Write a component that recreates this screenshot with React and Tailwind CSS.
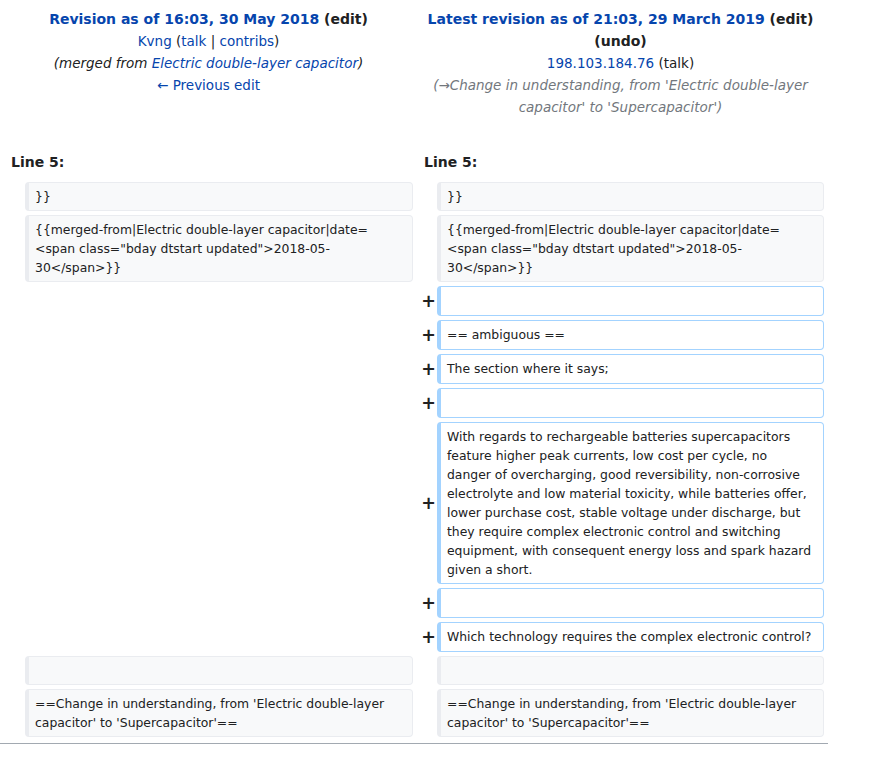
import React from 'react';

const LINK = 'text-[#0645ad]';

const Context = ({ children }) => (
  <div className="rounded-[4px] border border-l-4 border-[#eaecf0] bg-[#f8f9fa] px-[6px] py-[4px] min-h-[29px] whitespace-pre-wrap break-words">
    {children}
  </div>
);

const Added = ({ children }) => (
  <div className="rounded-[4px] border border-l-4 border-[#a3d3ff] bg-white px-[6px] py-[4px] min-h-[30px] whitespace-pre-wrap break-words">
    {children}
  </div>
);

const Plus = () => (
  <div className="flex items-center justify-end -mr-[3px] text-[17.5px] font-bold leading-[21px] text-[#202122]">+</div>
);

const addedLines = [
  '',
  '== ambiguous ==',
  'The section where it says;',
  '',
  'With regards to rechargeable batteries supercapacitors\nfeature higher peak currents, low cost per cycle, no\ndanger of overcharging, good reversibility, non-corrosive\nelectrolyte and low material toxicity, while batteries offer,\nlower purchase cost, stable voltage under discharge, but\nthey require complex electronic control and switching\nequipment, with consequent energy loss and spark hazard\ngiven a short.',
  '',
  'Which technology requires the complex electronic control?',
];

const merged = '{{merged-from|Electric double-layer capacitor|date=\n<span class="bday dtstart updated">2018-05-\n30</span>}}';
const change = "==Change in understanding, from 'Electric double-layer\ncapacitor' to 'Supercapacitor'==";

export default function App() {
  return (
    <div className="min-h-screen bg-white text-[#202122] font-['DejaVu_Sans',sans-serif] text-[14px]">
      <div className="w-[828px]">
        <div className="grid grid-cols-[17px_388px_16px_387px] gap-[4px] p-[4px]">
          {/* Titles */}
          <div className="col-span-2 pt-[4px] text-center leading-[22px]">
            <div className="font-bold">
              <span className={LINK}>Revision as of 16:03, 30 May 2018</span> (edit)
            </div>
            <div className="text-[13.5px]">
              <span className={LINK}>Kvng</span> (<span className={LINK}>talk</span> | <span className={LINK}>contribs</span>)
            </div>
            <div className="italic text-[13.5px]">
              (merged from <span className={LINK}>Electric double-layer capacitor</span>)
            </div>
            <div className={`text-[13.5px] ${LINK}`}>← Previous edit</div>
          </div>
          <div className="col-span-2 pt-[4px] text-center leading-[22px]">
            <div className="font-bold">
              <span className={LINK}>Latest revision as of 21:03, 29 March 2019</span> (edit)
            </div>
            <div className="font-bold">(undo)</div>
            <div className="text-[13.5px]">
              <span className={LINK}>198.103.184.76</span> (talk)
            </div>
            <div className="italic text-[13.5px] text-[#72777d]">
              (→Change in understanding, from 'Electric double-layer
              <br />
              capacitor' to 'Supercapacitor')
            </div>
          </div>

          {/* Line numbers */}
          <div className="col-span-2 pl-[7px] pt-[29px] pb-[5px] font-bold leading-[22px]">Line 5:</div>
          <div className="col-span-2 pl-[7px] pt-[29px] pb-[5px] font-bold leading-[22px]">Line 5:</div>

          {/* Diff body */}
          <div className="contents text-[12.4px] leading-[19px]">
            <div />
            <Context>{'}}'}</Context>
            <div />
            <Context>{'}}'}</Context>

            <div />
            <Context>{merged}</Context>
            <div />
            <Context>{merged}</Context>

            {addedLines.map((line, i) => (
              <React.Fragment key={i}>
                <div />
                <div />
                <Plus />
                <Added>{line}</Added>
              </React.Fragment>
            ))}

            <div />
            <Context>{''}</Context>
            <div />
            <Context>{''}</Context>

            <div />
            <Context>{change}</Context>
            <div />
            <Context>{change}</Context>
          </div>
        </div>
        <div className="mt-[2px] h-px bg-[#a2a9b1]" />
      </div>
    </div>
  );
}
